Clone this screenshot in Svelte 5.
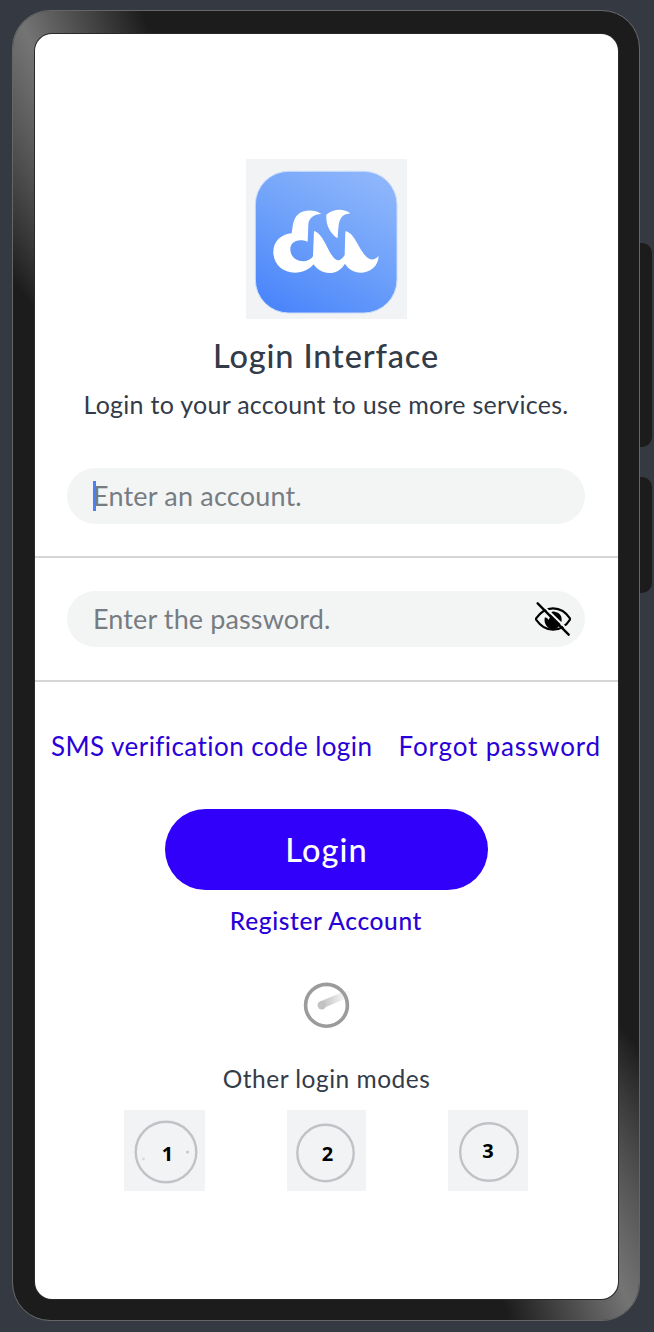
<script>
  const modes = [
    { n: '1', w: 81, h: 81, cx: 42, cy: 42, r: 30.3, tx: 43.5, ty: 50.5, dots: true },
    { n: '2', w: 79, h: 81, cx: 38.5, cy: 43, r: 28.2, tx: 40.5, ty: 51 },
    { n: '3', w: 80, h: 81, cx: 41, cy: 42, r: 28.8, tx: 40, ty: 48 }
  ];
</script>

<div class="stage">
  <div class="phone">
    <span class="key volume"></span>
    <span class="key power"></span>
    <main class="screen">
      <svg class="logo" viewBox="18 27 483 480">
        <defs>
          <linearGradient id="sky" x1="0.8" y1="0" x2="0.25" y2="1">
            <stop offset="0" stop-color="#8fb6fb" />
            <stop offset="0.5" stop-color="#6ea1fa" />
            <stop offset="1" stop-color="#4c86fb" />
          </linearGradient>
        </defs>
        <rect x="18" y="27" width="483" height="480" fill="#f1f3f5" />
        <rect x="46" y="64" width="425" height="425" rx="100" fill="url(#sky)" stroke="#c9dcfb" stroke-width="3" />
        <path
          fill="#fff"
          fill-rule="evenodd"
          d="M244 192C225 178 190 178 173 194C159 207 158 231 155 250C124 252 100 274 100 306C100 344 130 368 164 368C190 368 208 358 221 343C231 359 248 369 268 369C288 369 304 359 315 341C325 357 342 368 362 368C389 368 415 350 416 318C405 330 392 332 381 322C359 304 343 246 316 244L314 315C308 325 300 332 293 331C268 326 253 249 222 243L219 319C214 326 207 332 197 333C171 337 151 320 151 298C151 275 173 264 203 275L205 224C206 204 221 193 244 192Z"
        />
        <path fill="#fff" d="M331 190C312 175 280 176 259 194C257 225 270 250 293 265C297 231 290 194 331 190Z" />
      </svg>

      <h1>Login Interface</h1>
      <p class="sub">Login to your account to use more services.</p>

      <div class="field"><i class="caret"></i><span class="ph account">Enter an account.</span></div>
      <hr />
      <div class="field">
        <span class="ph pass">Enter the password.</span>
        <svg class="eye" viewBox="45 65 108 102">
          <path d="M47 116C64 91 81 84 99 84C119 84 138 95 151 116C138 138 119 148 99 148C79 148 62 138 47 116Z" fill="none" stroke="#000" stroke-width="6.5" />
          <path d="M74 112C79 110 83 115 86 119L91 108C88 99 97 92 104 94C119 96 126 107 125 120C123 134 113 147 100 147C84 147 71 132 74 112Z" />
          <path d="M58 65L153 158" stroke="#f3f5f5" stroke-width="6" />
          <path d="M53 69L146 163" stroke="#000" stroke-width="7" stroke-linecap="round" />
        </svg>
      </div>
      <hr class="second" />

      <nav><a href="#sms" class="sms">SMS verification code login</a><a href="#forgot" class="forgot">Forgot password</a></nav>

      <button>Login</button>
      <a href="#register" class="register">Register Account</a>

      <svg class="loader" viewBox="0 0 60 50">
        <defs>
          <linearGradient id="tail" x1="0" x2="1">
            <stop offset="0" stop-color="#c1c1c1" />
            <stop offset="0.35" stop-color="#d4d4d4" />
            <stop offset="1" stop-color="#ededed" stop-opacity="0.15" />
          </linearGradient>
        </defs>
        <path d="M24 21.5L48 11.5Q54 9.5 55 12.5Q55.5 16 50 18.5L27.5 28Z" fill="url(#tail)" />
        <circle cx="25.8" cy="25.2" r="4.2" fill="#c2c2c2" />
        <circle cx="30.5" cy="25.3" r="20.9" fill="none" stroke="#9b9b9b" stroke-width="3.6" />
      </svg>

      <p class="other">Other login modes</p>
      <div class="modes">
        {#each modes as m}
          <svg width={m.w} height={m.h}>
            <rect width={m.w} height={m.h} fill="#f1f3f5" />
            <circle cx={m.cx} cy={m.cy} r={m.r} fill="none" stroke="#c1c2c6" stroke-width="2.4" />
            {#if m.dots}
              <circle cx="63.5" cy="42" r="1.6" fill="#c9cacd" />
              <circle cx="19.5" cy="49" r="1.4" fill="#d9dadd" />
            {/if}
            <text x={m.tx} y={m.ty} text-anchor="middle">{m.n}</text>
          </svg>
        {/each}
      </div>
    </main>
  </div>
</div>

<style>
  :global(body) { background: #353942; }
  .stage {
    box-sizing: border-box;
    height: 1332px;
    padding: 10px 14px 11px 12px;
    background: #353942;
    font-family: Lato, "Noto Sans", sans-serif;
    color: #333b48;
    overflow: hidden;
  }
  .phone {
    position: relative;
    box-sizing: border-box;
    width: 628px;
    height: 1311px;
    padding: 23px 21px 21px 22px;
    border: 1px solid #666;
    border-radius: 38px;
    background: conic-gradient(#1c1c1c 0 140.7deg, #747474 154.6deg, #1c1c1c 164.4deg 320.7deg, #747474 334.6deg, #1c1c1c 344.4deg) border-box;
    background-clip: padding-box;
  }
  .key {
    position: absolute;
    left: 627px;
    width: 12px;
    background: #1c1c1c;
    border-radius: 0 10px 10px 0;
  }
  .volume { top: 232px; height: 204px; }
  .power { top: 466px; height: 116px; }
  .screen {
    box-sizing: border-box;
    width: 583px;
    height: 1265px;
    padding: 125px 1px 0 0;
    display: flex;
    flex-direction: column;
    align-items: center;
    background: #fff;
    border-radius: 17px;
    box-shadow: 0 0 0 1px #2a282b;
  }
  .logo { width: 161px; height: 160px; flex: none; margin-left: 1px; }
  h1, p { margin: 0; white-space: nowrap; }
  h1 { margin-top: 17px; font-size: 32.5px; line-height: 40px; font-weight: 500; letter-spacing: 0.87px; }
  .sub { margin-top: 12px; font-size: 25px; line-height: 32px; letter-spacing: 0.27px; }
  .field {
    box-sizing: border-box;
    position: relative;
    flex: none;
    width: 518px;
    height: 56px;
    display: flex;
    align-items: center;
    justify-content: space-between;
    padding: 0 14px 0 26px;
    border-radius: 28px;
    background: #f3f5f5;
  }
  .sub + .field { margin-top: 48px; }
  .caret { position: absolute; left: 26px; top: 13px; width: 3px; height: 30px; background: #4a80f5; }
  .ph { font-size: 27px; line-height: 36px; color: #777c83; letter-spacing: 0.2px; white-space: nowrap; }
  .account { position: relative; z-index: 0; }
  .caret { z-index: 1; }
  .pass { letter-spacing: 0.12px; }
  .eye { width: 36px; height: 34px; }
  hr { flex: none; width: 583px; height: 2px; margin: 32px -1px 33px 0; border: 0; background: #d6d6d6; }
  hr.second { margin: 33px -1px 0 0; }
  nav { display: flex; width: 100%; box-sizing: border-box; padding: 0 16px 0 16px; justify-content: space-between; margin-top: 46px; }
  a { color: #2a00d8; text-decoration: none; white-space: nowrap; }
  nav a { font-size: 26px; line-height: 36px; letter-spacing: 0.43px; }
  nav .forgot { letter-spacing: 0.85px; }
  button {
    flex: none;
    width: 323px;
    height: 81px;
    margin: 45px 0 0 1px;
    padding: 0;
    border: 0;
    border-radius: 41px;
    background: #3000fa;
    color: #fff;
    font: 500 32.5px/40px Lato, sans-serif;
    letter-spacing: 1.1px;
  }
  .register { margin-top: 15px; font-size: 24.5px; line-height: 32px; font-weight: 500; letter-spacing: 0.64px; }
  .loader { width: 60px; height: 50px; margin-top: 43px; flex: none; }
  .other { margin: 33px 0 0 1px; font-size: 24.5px; line-height: 32px; letter-spacing: 0.5px; }
  .modes { display: flex; justify-content: space-between; width: 404px; margin-top: 15px; }
  text { font: 700 20px "Open Sans", sans-serif; fill: #000; }
</style>
